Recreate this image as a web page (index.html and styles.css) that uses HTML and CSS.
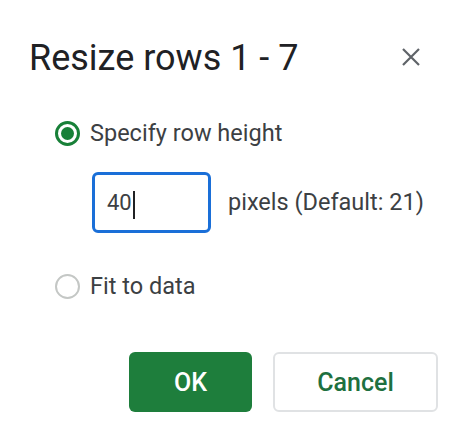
FILE: index.html
```html
<!DOCTYPE html>
<html>
<head>
<meta charset="utf-8">
<link rel="stylesheet" href="styles.css">
</head>
<body>
<div class="dialog">
  <div class="header">
    <h1 class="title">Resize rows 1 - 7</h1>
    <button class="close" aria-label="Close">
      <svg width="20" height="20" viewBox="0 0 20 20"><path d="M2 2 L18 18 M18 2 L2 18" stroke="#5f6368" stroke-width="2.2" fill="none"/></svg>
    </button>
  </div>
  <div class="options">
    <div class="option option-first">
      <span class="radio radio-on"><span class="dot"></span></span>
      <span class="label">Specify row height</span>
    </div>
    <div class="size-row">
      <div class="field"><span class="value">40</span><span class="caret"></span></div>
      <span class="label">pixels (Default: 21)</span>
    </div>
    <div class="option option-second">
      <span class="radio"></span>
      <span class="label">Fit to data</span>
    </div>
  </div>
  <div class="actions">
    <button class="btn btn-ok">OK</button>
    <button class="btn btn-cancel">Cancel</button>
  </div>
</div>
</body>
</html>
```
FILE: styles.css
```css
html, body {
  margin: 0;
  padding: 0;
  background: #ffffff;
}
body {
  font-family: Roboto, "Liberation Sans", Arial, sans-serif;
}
.dialog {
  width: 474px;
  height: 443px;
  box-sizing: border-box;
  padding: 37px 36px 0 29px;
}
.header {
  display: flex;
  justify-content: space-between;
  align-items: center;
  height: 42px;
}
.title {
  margin: 0;
  font-size: 36px;
  line-height: 42px;
  font-weight: 400;
  color: #202124;
  letter-spacing: 0;
}
.close {
  border: 0;
  background: none;
  padding: 0;
  width: 20px;
  height: 20px;
  margin-right: 17px;
  margin-top: -2px;
  display: flex;
}
.options {
  padding-left: 26px;
}
.option {
  display: flex;
  align-items: center;
  height: 27px;
}
.option-first {
  margin-top: 41px;
}
.option-second {
  margin-top: 40px;
}
.label {
  font-size: 23.5px;
  line-height: 27px;
  color: #3c4043;
}
.option .label {
  margin-left: 10px;
}
.radio {
  width: 25px;
  height: 25px;
  box-sizing: border-box;
  border-radius: 50%;
  border: 2px solid #c4c7c5;
  display: flex;
  align-items: center;
  justify-content: center;
}
.radio-on {
  border: 3px solid #188038;
}
.dot {
  width: 13px;
  height: 13px;
  border-radius: 50%;
  background: #188038;
}
.size-row {
  display: flex;
  align-items: center;
  margin-top: 25px;
  margin-left: 37px;
}
.field {
  width: 119px;
  height: 61px;
  box-sizing: border-box;
  border: 3px solid #1a6fd8;
  border-radius: 6px;
  padding-left: 12px;
  display: flex;
  align-items: center;
  font-size: 22px;
  color: #3c4043;
}
.value {
  line-height: 27px;
}
.caret {
  width: 2px;
  height: 28px;
  background: #202124;
  margin-left: 1px;
  margin-top: 4px;
}
.size-row .label {
  margin-left: 17px;
}
.actions {
  display: flex;
  justify-content: flex-end;
  gap: 21px;
  margin-top: 52px;
}
.btn {
  height: 60px;
  box-sizing: border-box;
  border-radius: 6px;
  font-family: Roboto, "Liberation Sans", Arial, sans-serif;
  font-size: 25px;
  font-weight: 500;
  padding: 0;
}
.btn-ok {
  width: 123px;
  background: #1e7e3c;
  color: #ffffff;
  border: 0;
}
.btn-cancel {
  width: 165px;
  background: #ffffff;
  color: #1e7040;
  border: 2px solid #e0e2e4;
}
```
